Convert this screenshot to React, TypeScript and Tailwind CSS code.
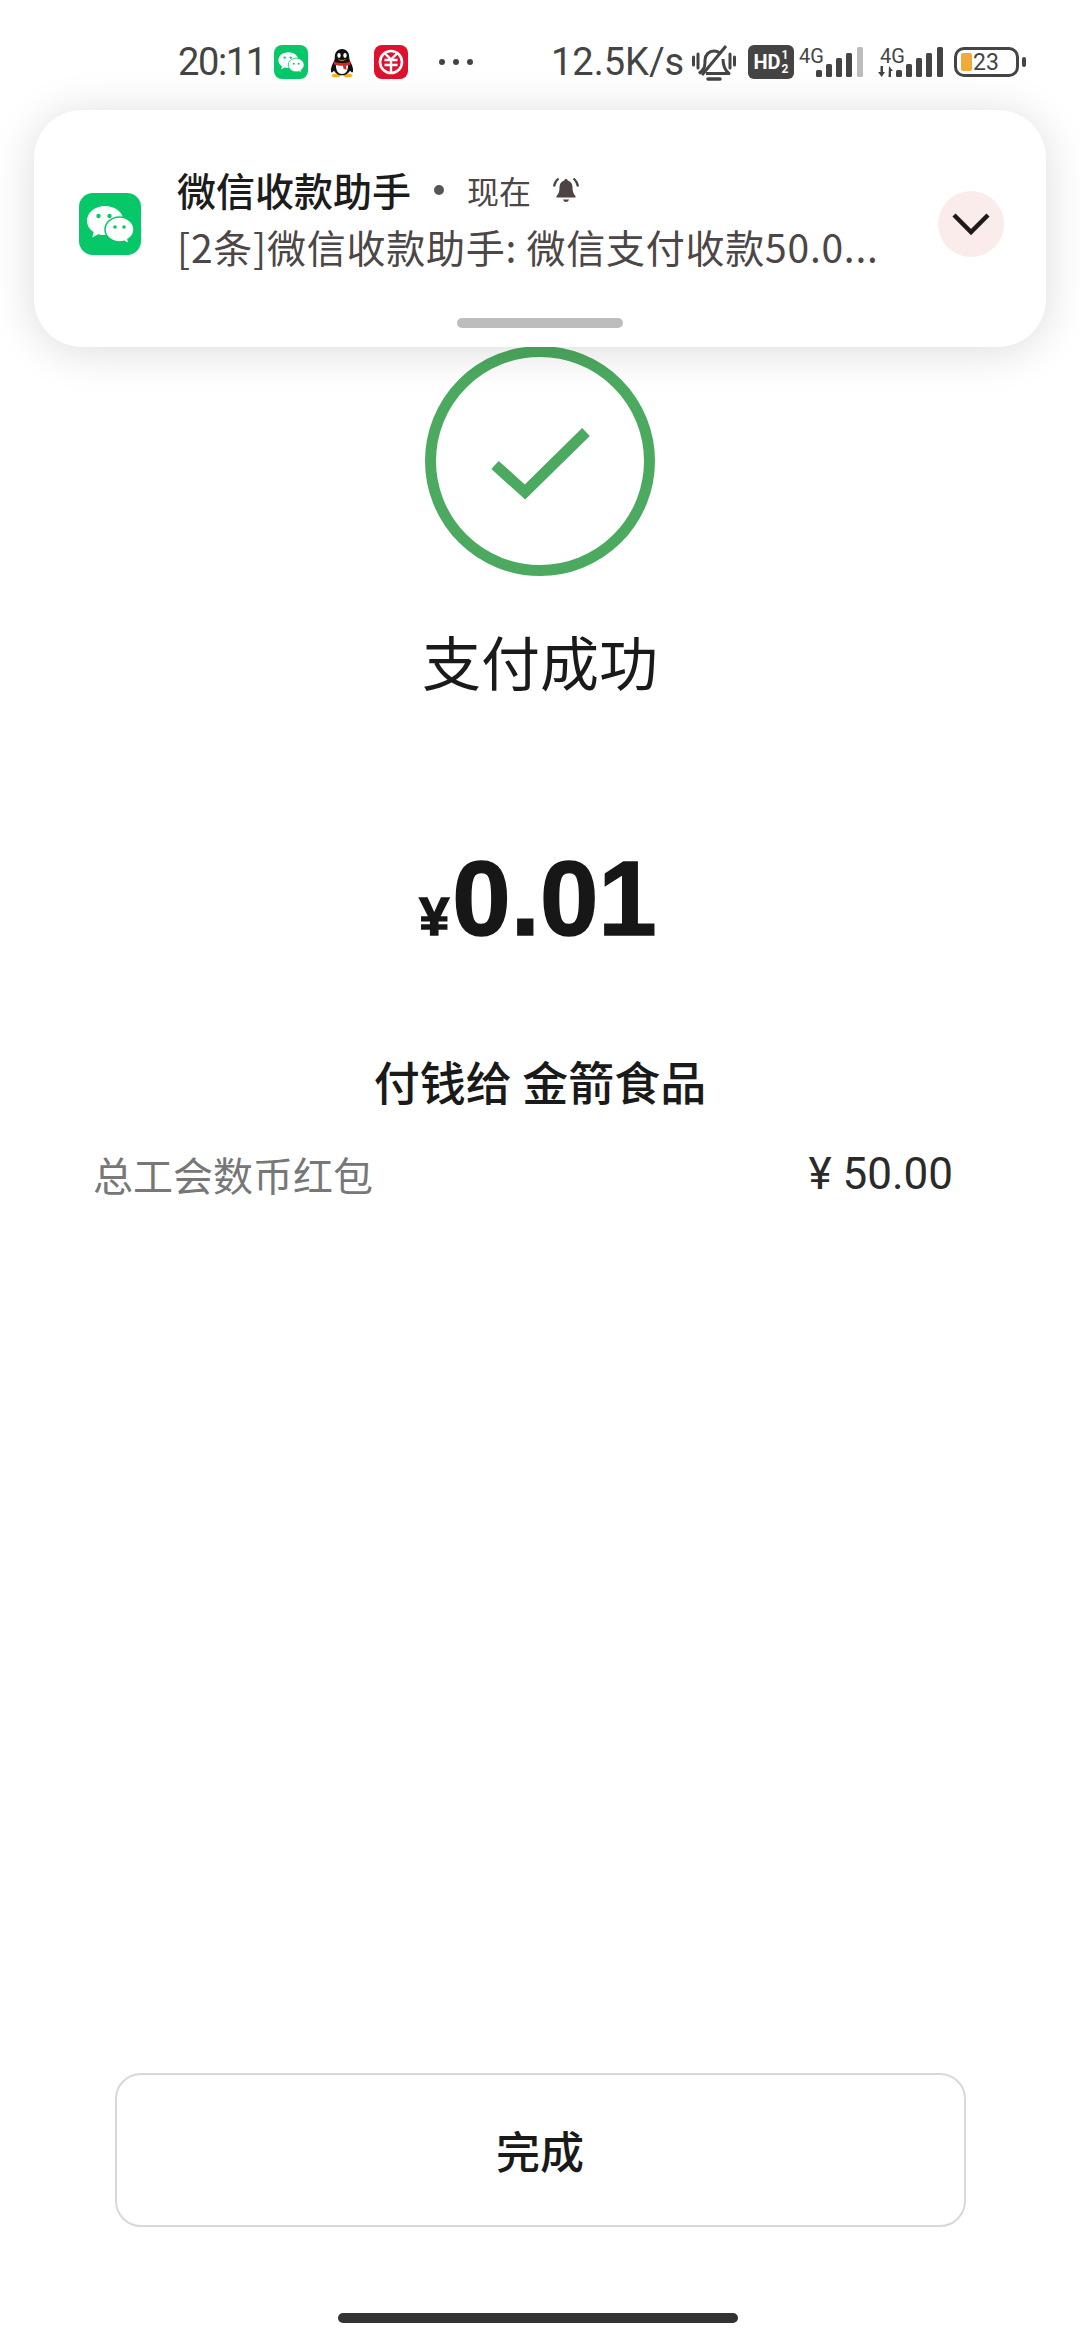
const cjk = "font-['Noto_Sans_CJK_SC',sans-serif]";

function WechatGlyph({ size, rounded }: { size: number; rounded: string }) {
  return (
    <svg width={size} height={size} viewBox="0 0 62 62" className={rounded}>
      <rect width="62" height="62" fill="#07c869" />
      <path d="M26 13c-10 0-18 6.500-18 14.700 0 4.600 2.600 8.700 6.700 11.400l-1.500 5.300 6-3.200c2 .6 4.300.9 6.600.9.500 0 1 0 1.500-.1-.4-1.200-.6-2.400-.6-3.700 0-7.400 7-13.300 15.800-13.300h1.500C42.800 18 35 13 26 13z" fill="#fff" />
      <path d="M55 36.500C55 29.600 48.300 24 40.500 24S26 29.600 26 36.500 32.700 49 40.500 49c1.700 0 3.300-.3 4.800-.8l5 2.700-1.400-4.500c3.700-2.300 6.100-6 6.100-9.900z" fill="#fff" stroke="#07c869" strokeWidth="1.500" />
      <circle cx="19.500" cy="23" r="2.200" fill="#07c869" />
      <circle cx="30.500" cy="23" r="2.200" fill="#07c869" />
      <circle cx="36" cy="34" r="1.800" fill="#07c869" />
      <circle cx="45" cy="34" r="1.800" fill="#07c869" />
    </svg>
  );
}

function QQIcon() {
  return (
    <svg width="24" height="30" viewBox="0 0 24 30">
      <ellipse cx="6" cy="27.500" rx="4.500" ry="1.800" fill="#f5b01f" />
      <ellipse cx="18" cy="27.500" rx="4.500" ry="1.800" fill="#f5b01f" />
      <path d="M12 1c-4.800 0-7.200 3.700-7.200 8 0 1.700-.3 3-1 4.500C2 17 .4 20.500 1 23.500c.5 1.800 2 .5 3-1 1 2.500 4 4.800 8 4.800s7-2.300 8-4.800c1 1.500 2.500 2.800 3 1 .6-3-1-6.500-2.800-10-.7-1.500-1-2.800-1-4.500 0-4.300-2.400-8-7.200-8z" fill="#111" />
      <path d="M6 15c-.5 6 1 11 6 11s6.500-5 6-11z" fill="#fff" />
      <ellipse cx="9" cy="7.500" rx="1.700" ry="2.400" fill="#fff" />
      <ellipse cx="15" cy="7.500" rx="1.700" ry="2.400" fill="#fff" />
      <path d="M8 11c2.500 1.300 5.500 1.300 8 0-1 2.400-7 2.400-8 0z" fill="#f5b01f" />
      <path d="M4 13.500c5 2 11 2 16 0l.5 3c-1.500.7-3 1.100-4.500 1.300l.5 4-3-1-.5-3c-3.300 0-6.500-.6-9-1.300z" fill="#d9252a" />
    </svg>
  );
}

function YuanIcon() {
  return (
    <svg width="34" height="34" viewBox="0 0 34 34">
      <rect width="34" height="34" rx="8" fill="#e0102f" />
      <circle cx="17" cy="17" r="11" fill="none" stroke="#fff" strokeWidth="2.600" />
      <path d="M11 8.500l6 6 6-6M17 14v13M10.500 15h13M10.500 20h13" fill="none" stroke="#fff" strokeWidth="2.400" />
    </svg>
  );
}

function MuteBell() {
  return (
    <svg width="44" height="38" viewBox="0 0 44 38" fill="none" stroke="#444" strokeWidth="3">
      <path d="M7 29.500c2.500-2 4-3.500 5-5.500M12 24c1-2 1-5 1-8 0-5 4-9 9-9 2.500 0 5 1 6.500 3M31 15c0 5 .500 10 6 14.500H14" strokeLinejoin="round" />
      <path d="M16 35h12" strokeWidth="3.500" strokeLinecap="round" />
      <path d="M34 2L10 31" />
      <path d="M1.500 13v8M6 10v14M38 10v14M42.500 13v8" strokeWidth="3" strokeLinecap="round" />
    </svg>
  );
}

function Signal({ last }: { last: string }) {
  const bars = [
    { x: 0, h: 7, c: "#444" },
    { x: 10, h: 13, c: "#444" },
    { x: 20, h: 19, c: "#444" },
    { x: 30, h: 24, c: "#444" },
    { x: 41, h: 30, c: last },
  ];
  return (
    <svg width="48" height="30" viewBox="0 0 48 30">
      {bars.map((b) => (
        <rect key={b.x} x={b.x} y={30 - b.h} width="6" height={b.h} rx="1.500" fill={b.c} />
      ))}
    </svg>
  );
}

function StatusBar() {
  return (
    <div className="flex h-[124px] items-start pt-[45px] pl-[178px] font-['Roboto',sans-serif] text-[#444]">
      <span className="w-[96px] text-[38px] leading-[34px] tracking-[-1.400px]">20:11</span>
      <WechatGlyph size={34} rounded="rounded-[8px]" />
      <div className="ml-[22px] mr-[20px] mt-[3px]"><QQIcon /></div>
      <YuanIcon />
      <div className="ml-[31px] mt-[14px] flex gap-[8px]">
        <span className="size-[6px] rounded-full bg-[#444]" />
        <span className="size-[6px] rounded-full bg-[#444]" />
        <span className="size-[6px] rounded-full bg-[#444]" />
      </div>
      <span className="ml-[78px] w-[141px] text-[38px] leading-[34px]">12.5K/s</span>
      <div className="-mt-[1px]"><MuteBell /></div>
      <div className="ml-[12px] flex h-[34px] w-[46px] items-center justify-center gap-[1px] rounded-[6px] bg-[#444] text-white">
        <span className="text-[20px] font-bold leading-none">HD</span>
        <span className="flex flex-col text-[12px] font-bold leading-[14px]">
          <span>1</span>
          <span>2</span>
        </span>
      </div>
      <div className="relative ml-[5px] h-[34px] w-[64px]">
        <span className="absolute left-0 top-[1px] text-[20px] leading-none">4G</span>
        <div className="absolute bottom-[2px] left-[17px]"><Signal last="#bcbcbc" /></div>
      </div>
      <div className="relative ml-[15px] h-[34px] w-[64px]">
        <span className="absolute left-[2px] top-[1px] text-[20px] leading-none">4G</span>
        <svg className="absolute left-0 top-[21px]" width="16" height="11" viewBox="0 0 16 11" fill="#444">
          <path d="M2.500 0h2.500v6h2L3.700 11 0 6h2.500zM11 0l4 5h-2v6h-2.500z" />
        </svg>
        <div className="absolute bottom-[2px] left-[18px]"><Signal last="#444" /></div>
      </div>
      <div className="ml-[12px] mt-[2px] flex items-center">
        <div className="flex h-[30px] w-[65px] items-center rounded-[10px] border-[3px] border-[#444] pl-[4px]">
          <span className="h-[18px] w-[11px] rounded-[2px] bg-[#f1a93c]" />
          <span className="ml-[1px] text-[23px] leading-none">23</span>
        </div>
        <span className="ml-[3px] h-[10px] w-[4px] rounded-full bg-[#444]" />
      </div>
    </div>
  );
}

function Notification() {
  return (
    <div className={`absolute left-[34px] top-[110px] z-10 flex h-[237px] w-[1012px] items-center rounded-[48px] bg-white pb-[10px] pl-[45px] pr-[42px] shadow-[0_4px_46px_rgba(0,0,0,0.14)] ${cjk}`}>
      <WechatGlyph size={62} rounded="shrink-0 rounded-[14px]" />
      <div className="-mt-[11px] ml-[36px] flex-1">
        <div className="flex h-[57px] items-center">
          <span className="text-[39px] font-medium leading-none text-[#1c1c1c]">微信收款助手</span>
          <span className="ml-[23px] size-[10px] rounded-full bg-[#555]" />
          <span className="ml-[23px] text-[32px] leading-none text-[#4d4646]">现在</span>
          <svg className="ml-[21px]" width="28" height="28" viewBox="0 0 28 28">
            <path d="M14 3c-1 0-1.600.7-1.700 1.600C9 5.500 7.500 8.300 7.500 11.500c0 4-1 6.500-3 8.500v1.500h19V20c-2-2-3-4.500-3-8.500 0-3.200-1.500-6-4.800-6.900C15.600 3.700 15 3 14 3z" fill="#4f4444" />
            <path d="M11 23.500h6c-.5 1.700-1.600 2.500-3 2.500s-2.500-.8-3-2.500z" fill="#4f4444" />
            <path d="M6.500 2.500C4 4.500 2.500 7 2 10.500M21.500 2.500C24 4.500 25.500 7 26 10.500" fill="none" stroke="#4f4444" strokeWidth="2.200" />
          </svg>
        </div>
        <div className="h-[57px] whitespace-nowrap text-[39px] leading-[57px] tracking-[0.75px] text-[#4d4646]">
          [2条]微信收款助手: 微信支付收款50.0...
        </div>
      </div>
      <button className="flex size-[66px] shrink-0 items-center justify-center rounded-full bg-[#fbecec]">
        <svg width="38" height="24" viewBox="0 0 38 24" fill="none" stroke="#1f1a1a" strokeWidth="4.500">
          <path d="M2 3l17 17L36 3" />
        </svg>
      </button>
      <span className="absolute bottom-[19px] left-[423px] h-[10px] w-[166px] rounded-full bg-[#bdbdbd]" />
    </div>
  );
}

export default function App() {
  return (
    <div className={`relative flex h-[2340px] w-[1080px] flex-col overflow-hidden bg-white ${cjk}`}>
      <StatusBar />
      <Notification />

      <main className="flex flex-1 flex-col items-center">
        <svg className="mt-[222px]" width="230" height="230" viewBox="0 0 230 230" fill="none" stroke="#4caa60">
          <circle cx="115" cy="115" r="109.500" strokeWidth="11" />
          <path d="M70 119l30 27 61-60" strokeWidth="11" />
        </svg>

        <h1 className="mt-[42px] text-[59px] font-normal leading-[86px] text-[#1a1a1a]">支付成功</h1>

        <div className="mt-[142px] flex h-[104px] -translate-x-[2px] items-baseline font-['Liberation_Sans',sans-serif] font-bold leading-none text-[#171717] [-webkit-text-stroke:1.500px_#171717]">
          <span className="mr-[3px] text-[54px]">¥</span>
          <span className="text-[105px]">0.01</span>
        </div>

        <div className="mt-[98px] text-[46px] font-medium leading-[64px] text-[#1a1a1a]">付钱给 金箭食品</div>

        <div className="mt-[33px] flex w-full items-center justify-between pl-[93px] pr-[127px]">
          <span className="text-[40px] leading-[58px] text-[#777]">总工会数币红包</span>
          <span className="font-['Roboto',sans-serif] text-[44px] leading-[58px] text-[#2a2a2a]">¥ 50.00</span>
        </div>
      </main>

      <footer className="flex flex-col items-center">
        <button className="flex h-[154px] w-[851px] items-center justify-center rounded-[26px] border-2 border-[#d8d8d8] bg-white text-[44px] font-medium text-[#1a1a1a]">
          完成
        </button>
        <div className="mb-[17px] mr-[4px] mt-[86px] h-[10px] w-[400px] rounded-full bg-[#333]" />
      </footer>
    </div>
  );
}
